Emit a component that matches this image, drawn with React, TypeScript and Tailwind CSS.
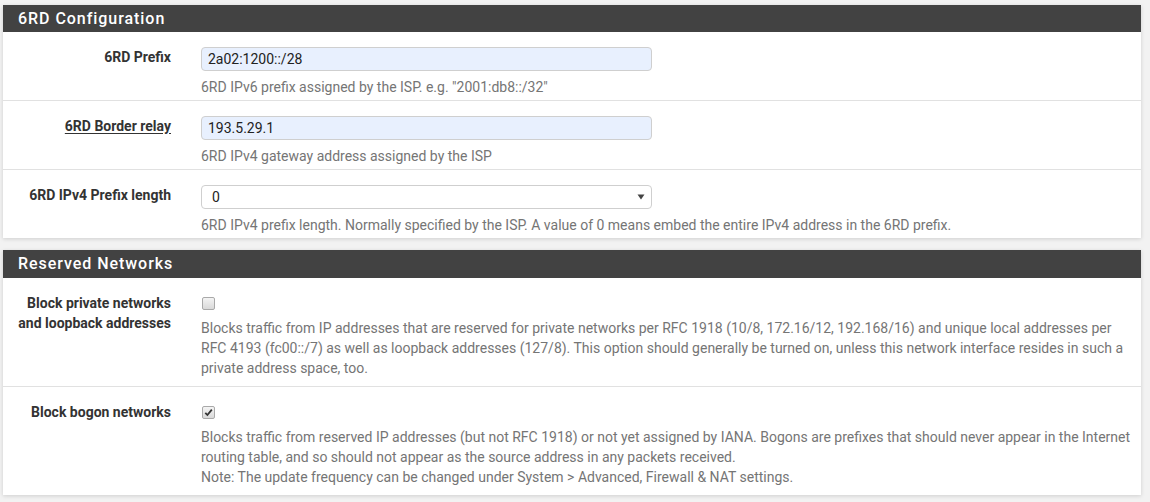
import React from "react";

function Checkbox({ checked }: { checked?: boolean }) {
  return (
    <span className="flex h-[13px] w-[13px] items-center justify-center rounded-[2px] border border-[#a9a9a9] bg-gradient-to-b from-[#f4f4f4] to-[#d9d9d9]">
      {checked && (
        <svg width="9" height="9" viewBox="0 0 9 9">
          <path d="M1.3 4.8 L3.4 7 L7.8 1.6" fill="none" stroke="#333" strokeWidth="1.8" />
        </svg>
      )}
    </span>
  );
}

function Heading({ title, h }: { title: string; h: string }) {
  return (
    <div className={"flex items-center bg-[#424242] pl-[15px] text-[16px] font-medium tracking-[0.95px] text-white " + h}>
      {title}
    </div>
  );
}

function Row({
  label,
  children,
  last,
  pb,
}: {
  label: React.ReactNode;
  children: React.ReactNode;
  last?: boolean;
  pb: string;
}) {
  return (
    <div className={"flex pt-[15px] " + pb + (last ? "" : " border-b border-[#e1e1e1]")}>
      <div className="w-[183px] shrink-0 pr-[15px] text-right text-[14px] font-bold leading-[20px] text-[#333]">
        {label}
      </div>
      <div className="flex-1 pl-[15px] pr-[4px]">{children}</div>
    </div>
  );
}

export default function App() {
  const help = "mt-[6px] text-[14px] leading-[20px] text-[#757575]";
  const input =
    "h-[24px] w-[451px] rounded-[4px] border border-[#cfcfcf] px-[6px] text-[14px] leading-[22px] text-[#222]";

  return (
    <div className="min-h-[502px] bg-[#f2f2f2] pl-[3px] pr-[9px] pt-[5px] font-['Roboto',sans-serif]">
      <div className="bg-white shadow-[0_1px_4px_rgba(0,0,0,0.15)]">
        <Heading title="6RD Configuration" h="h-[27px]" />
        <Row label="6RD Prefix" pb="pb-[3px]">
          <div className={input + " bg-[#e8f0fe]"}>2a02:1200::/28</div>
          <div className={help}>6RD IPv6 prefix assigned by the ISP. e.g. "2001:db8::/32"</div>
        </Row>
        <Row
          label={<span className="underline underline-offset-2">6RD Border relay</span>}
          pb="pb-[3px]"
        >
          <div className={input + " bg-[#e8f0fe]"}>193.5.29.1</div>
          <div className={help}>6RD IPv4 gateway address assigned by the ISP</div>
        </Row>
        <Row label="6RD IPv4 Prefix length" last pb="pb-[3px]">
          <div className={input + " flex items-center justify-between bg-white pl-[10px] pr-[6px]"}>
            <span>0</span>
            <svg width="8" height="6" viewBox="0 0 8 6">
              <path d="M0.5 0.5 H7.5 L4 5.5 Z" fill="#444" />
            </svg>
          </div>
          <div className={help}>
            6RD IPv4 prefix length. Normally specified by the ISP. A value of 0 means embed the entire IPv4 address in the 6RD prefix.
          </div>
        </Row>
      </div>

      <div className="mt-[12px] bg-white shadow-[0_1px_4px_rgba(0,0,0,0.15)]">
        <Heading title="Reserved Networks" h="h-[28px]" />
        <Row
          label={
            <>
              Block private networks
              <br />
              and loopback addresses
            </>
          }
          pb="pb-[8px]"
        >
          <div className="flex h-[20px] items-center pl-[1px]">
            <Checkbox />
          </div>
          <div className="mt-[5px] text-[14px] leading-[20px] text-[#757575]">
            Blocks traffic from IP addresses that are reserved for private networks per RFC 1918 (10/8, 172.16/12, 192.168/16) and unique local addresses per
            <br />
            RFC 4193 (fc00::/7) as well as loopback addresses (127/8). This option should generally be turned on, unless this network interface resides in such a
            <br />
            private address space, too.
          </div>
        </Row>
        <Row label="Block bogon networks" last pb="pb-[8px]">
          <div className="flex h-[20px] items-center pl-[1px]">
            <Checkbox checked />
          </div>
          <div className="mt-[5px] text-[14px] leading-[20px] text-[#757575]">
            Blocks traffic from reserved IP addresses (but not RFC 1918) or not yet assigned by IANA. Bogons are prefixes that should never appear in the Internet
            <br />
            routing table, and so should not appear as the source address in any packets received.
            <br />
            Note: The update frequency can be changed under System &gt; Advanced, Firewall &amp; NAT settings.
          </div>
        </Row>
      </div>
    </div>
  );
}
